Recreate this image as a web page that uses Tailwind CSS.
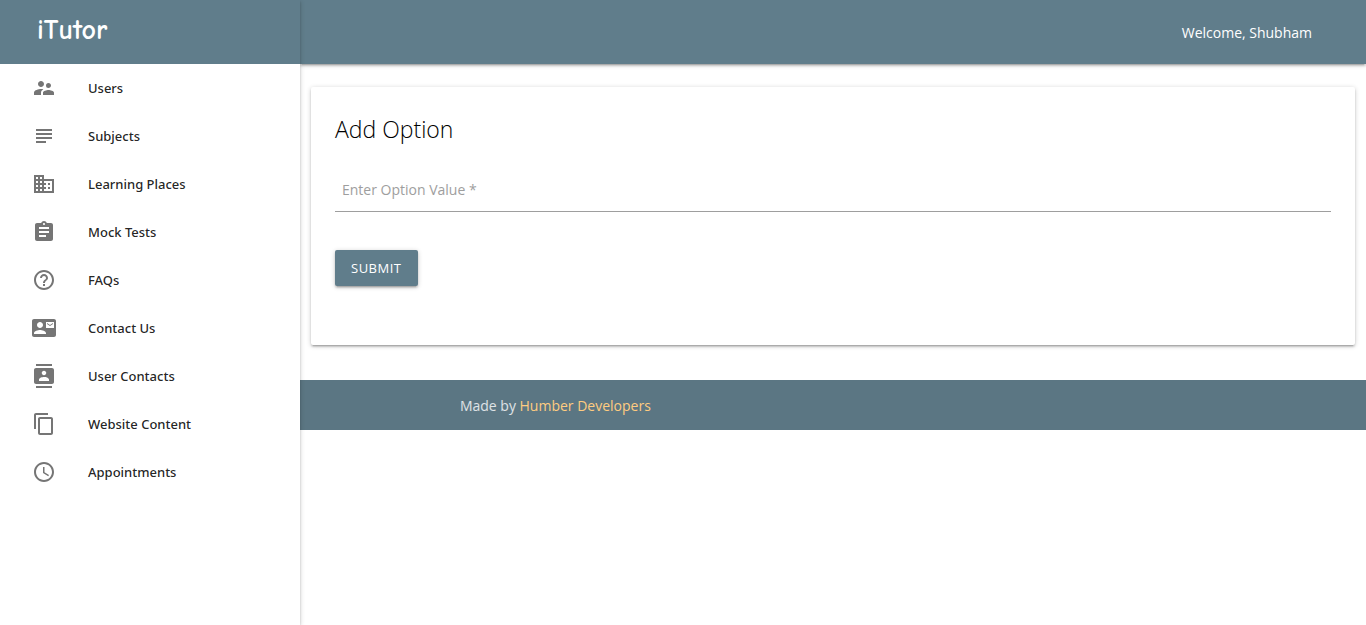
<!DOCTYPE html>
<html lang="en">
<head>
<meta charset="utf-8">
<meta name="viewport" content="width=device-width, initial-scale=1">
<title>iTutor - Add Option</title>
<script src="https://cdn.jsdelivr.net/npm/@tailwindcss/browser@4"></script>
</head>
<body class="flex min-h-screen bg-white font-['Open_Sans','Noto_Sans',sans-serif] text-sm text-black/87">
<aside class="relative z-10 w-[300px] shrink-0 bg-white shadow-[0_2px_2px_0_rgba(0,0,0,0.14),0_3px_1px_-2px_rgba(0,0,0,0.12),0_1px_5px_0_rgba(0,0,0,0.2)]">
  <div class="flex h-16 items-center bg-[#607d8b] pb-1 pl-[37px]">
    <a href="#" class="font-['Comic_Neue','Comic_Sans_MS','Noto_Sans',sans-serif] text-[28px] leading-8 font-bold text-white">iTutor</a>
  </div>
  <nav class="font-['Noto_Sans',sans-serif] text-[13px] font-medium [&_a]:flex [&_a]:h-12 [&_a]:items-center [&_a]:gap-8 [&_a]:px-8 [&_svg]:size-6 [&_svg]:fill-[#757575]">
    <a href="#"><svg viewBox="0 0 24 24"><path d="M16.5 12c1.38 0 2.49-1.12 2.49-2.5S17.88 7 16.5 7a2.5 2.5 0 0 0 0 5zM9 11c1.66 0 2.99-1.34 2.99-3S10.66 5 9 5 6 6.34 6 8s1.34 3 3 3zm7.500 3c-1.830 0-5.500.92-5.500 2.750V19h11v-2.250c0-1.830-3.670-2.750-5.500-2.750zM9 13c-2.330 0-7 1.170-7 3.500V19h7v-2.250c0-.85.33-2.340 2.370-3.470C10.500 13.100 9.660 13 9 13z"/></svg>Users</a>
    <a href="#"><svg viewBox="0 0 24 24"><path d="M14 17H4v2h10v-2zm6-8H4v2h16V9zM4 15h16v-2H4v2zM4 5v2h16V5H4z"/></svg>Subjects</a>
    <a href="#"><svg viewBox="0 0 24 24"><path d="M12 7V3H2v18h20V7H12zM6 19H4v-2h2v2zm0-4H4v-2h2v2zm0-4H4V9h2v2zm0-4H4V5h2v2zm4 12H8v-2h2v2zm0-4H8v-2h2v2zm0-4H8V9h2v2zm0-4H8V5h2v2zm10 12h-8v-2h2v-2h-2v-2h2v-2h-2V9h8v10zm-2-8h-2v2h2v-2zm0 4h-2v2h2v-2z"/></svg>Learning Places</a>
    <a href="#"><svg viewBox="0 0 24 24"><path d="M19 3h-4.180C14.400 1.840 13.300 1 12 1c-1.300 0-2.400.84-2.820 2H5c-1.100 0-2 .9-2 2v14c0 1.100.9 2 2 2h14c1.100 0 2-.9 2-2V5c0-1.100-.9-2-2-2zm-7 0c.55 0 1 .45 1 1s-.45 1-1 1-1-.45-1-1 .45-1 1-1zm2 14H7v-2h7v2zm3-4H7v-2h10v2zm0-4H7V7h10v2z"/></svg>Mock Tests</a>
    <a href="#"><svg viewBox="0 0 24 24"><path d="M11 18h2v-2h-2v2zm1-16C6.480 2 2 6.480 2 12s4.480 10 10 10 10-4.480 10-10S17.520 2 12 2zm0 18c-4.410 0-8-3.590-8-8s3.590-8 8-8 8 3.590 8 8-3.590 8-8 8zm0-14c-2.210 0-4 1.790-4 4h2c0-1.100.9-2 2-2s2 .9 2 2c0 2-3 1.750-3 5h2c0-2.250 3-2.500 3-5 0-2.210-1.790-4-4-4z"/></svg>FAQs</a>
    <a href="#"><svg viewBox="0 0 24 24"><path d="M21 8V7l-3 2-3-2v1l3 2 3-2zm1-5H2C.9 3 0 3.900 0 5v14c0 1.100.9 2 2 2h20c1.100 0 1.990-.9 1.990-2L24 5c0-1.100-.9-2-2-2zM8 6c1.660 0 3 1.340 3 3s-1.340 3-3 3-3-1.340-3-3 1.340-3 3-3zm6 12H2v-1c0-2 4-3.100 6-3.100s6 1.100 6 3.100v1zm8-6h-8V6h8v6z"/></svg>Contact Us</a>
    <a href="#"><svg viewBox="0 0 24 24"><path d="M20 0H4v2h16V0zM4 24h16v-2H4v2zM20 4H4c-1.100 0-2 .9-2 2v12c0 1.100.9 2 2 2h16c1.100 0 2-.9 2-2V6c0-1.100-.9-2-2-2zm-8 2.750c1.240 0 2.250 1.010 2.250 2.250s-1.010 2.250-2.250 2.250S9.750 10.240 9.750 9 10.760 6.750 12 6.750zM17 17H7v-1.500c0-1.670 3.330-2.500 5-2.500s5 .83 5 2.500V17z"/></svg>User Contacts</a>
    <a href="#"><svg viewBox="0 0 24 24"><path d="M16 1H4c-1.100 0-2 .9-2 2v14h2V3h12V1zm3 4H8c-1.100 0-2 .9-2 2v14c0 1.100.9 2 2 2h11c1.100 0 2-.9 2-2V7c0-1.100-.9-2-2-2zm0 16H8V7h11v14z"/></svg>Website Content</a>
    <a href="#"><svg viewBox="0 0 24 24"><path d="M11.990 2C6.470 2 2 6.480 2 12s4.470 10 9.990 10C17.520 22 22 17.520 22 12S17.520 2 11.990 2zM12 20c-4.420 0-8-3.580-8-8s3.580-8 8-8 8 3.580 8 8-3.580 8-8 8z"/><path d="M12.500 7H11v6l5.250 3.150.75-1.230-4.500-2.670z"/></svg>Appointments</a>
  </nav>
</aside>
<div class="min-w-0 flex-1">
  <header class="flex h-16 items-center justify-end bg-[#607d8b] pt-0.5 pr-[54px] text-white shadow-[0_2px_2px_0_rgba(0,0,0,0.14),0_3px_1px_-2px_rgba(0,0,0,0.12),0_1px_5px_0_rgba(0,0,0,0.2)]">
    <span>Welcome, Shubham</span>
  </header>
  <main class="px-[11px] pt-[23px] pb-[35px]">
    <form class="rounded-xs bg-white px-6 pt-6 pb-[59px] shadow-[0_2px_2px_0_rgba(0,0,0,0.14),0_3px_1px_-2px_rgba(0,0,0,0.12),0_1px_5px_0_rgba(0,0,0,0.2)]">
      <h1 class="text-[23px] leading-9 font-light text-black">Add Option</h1>
      <div class="relative mt-5">
        <label for="option" class="absolute inset-y-0 left-[7px] flex items-center text-[#9e9e9e]">Enter Option Value *</label>
        <input id="option" type="text" required class="block h-[45px] w-full border-b border-[#9e9e9e] bg-transparent px-[7px] outline-none">
      </div>
      <button type="submit" class="mt-[38px] block h-9 rounded-xs bg-[#607d8b] px-4 text-[13px] tracking-[0.5px] text-white uppercase shadow-[0_2px_2px_0_rgba(0,0,0,0.14),0_3px_1px_-2px_rgba(0,0,0,0.12),0_1px_5px_0_rgba(0,0,0,0.2)]">Submit</button>
    </form>
  </main>
  <footer class="flex h-[50px] items-center bg-[#5b7683] px-[15%] pt-0.5 text-white/80">
    <p>Made by <a href="#" class="text-[#ffcc80]">Humber Developers</a></p>
  </footer>
</div>
</body>
</html>
